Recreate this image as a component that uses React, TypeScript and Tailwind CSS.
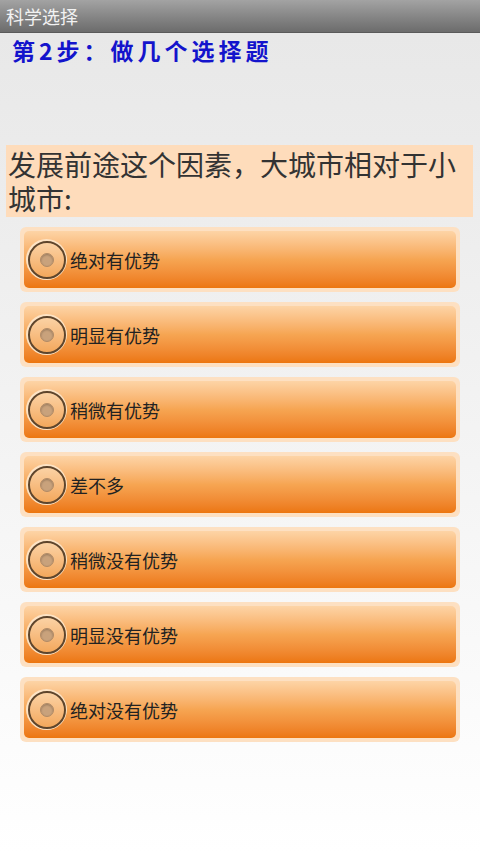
import React from "react";

const options = [
  "绝对有优势",
  "明显有优势",
  "稍微有优势",
  "差不多",
  "稍微没有优势",
  "明显没有优势",
  "绝对没有优势",
];

const font = { fontFamily: '"Noto Sans CJK SC", "Noto Sans", sans-serif' };

function Radio() {
  return (
    <div className="w-[41px] h-[41px] rounded-full bg-[#fde3c4] flex items-center justify-center shrink-0">
      <div className="w-[38px] h-[38px] rounded-full border-[2px] border-[#5e452c] bg-gradient-to-b from-[#fbd2a4] to-[#f3a85c] flex items-center justify-center">
        <div className="w-[14px] h-[14px] rounded-full bg-[#c9a27c] border border-[#b08a66] shadow-[inset_0_1px_2px_rgba(0,0,0,0.25)]" />
      </div>
    </div>
  );
}

export default function App() {
  return (
    <div className="w-[480px] h-[853px] flex flex-col overflow-hidden" style={font}>
      <div className="h-[33px] shrink-0 bg-gradient-to-b from-[#a3a3a3] to-[#6c6c6c] flex items-center px-[6px] border-b border-[#5a5a5a]">
        <span className="text-[18px] text-[#f2f2f2] leading-none">科学选择</span>
      </div>
      <div className="flex-1 bg-gradient-to-b from-[#e8e8e8] to-[#ffffff] flex flex-col">
        <div className="pl-[12px] pt-[1px] h-[112px]">
          <span className="text-[23px] font-bold text-[#1414cc] tracking-[4px] leading-[32px]">第2步：做几个选择题</span>
        </div>
        <div className="mx-[6px] w-[467px] bg-[#fedcbb] pl-[2px] py-[2px] text-[28px] leading-[34px] text-[#333333]">
          发展前途这个因素，大城市相对于小城市:
        </div>
        <div className="flex flex-col gap-[10px] mt-[10px] px-[20px]">
          {options.map((o) => (
            <div key={o} className="h-[65px] w-[440px] rounded-[6px] bg-[#fde0c2] p-[4px]">
              <div className="h-full rounded-[5px] bg-gradient-to-b from-[#fdd4a6] via-[#f6a552] to-[#ec760e] flex items-center pl-[2px] gap-[3px]">
                <Radio />
                <span className="text-[18px] text-[#222222] leading-none">{o}</span>
              </div>
            </div>
          ))}
        </div>
      </div>
    </div>
  );
}
